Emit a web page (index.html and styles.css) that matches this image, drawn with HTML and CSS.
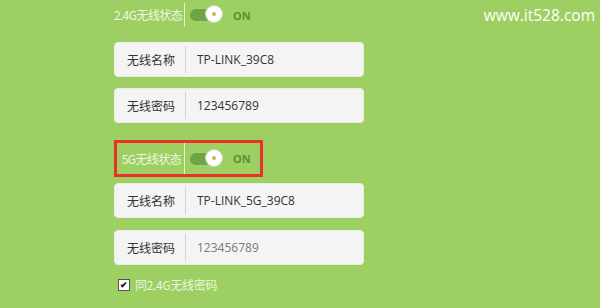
FILE: index.html
```html
<!DOCTYPE html>
<html>
<head>
<meta charset="utf-8">
<link rel="stylesheet" href="styles.css">
</head>
<body>
<div class="watermark">www.it528.com</div>
<div class="form">
  <div class="status-row first">
    <span class="status-label">2.4G无线状态</span>
    <span class="sep"></span>
    <span class="toggle"><span class="knob"></span></span>
    <span class="on">ON</span>
  </div>
  <div class="field f1">
    <span class="field-label">无线名称</span>
    <span class="field-value">TP-LINK_39C8</span>
  </div>
  <div class="field f2">
    <span class="field-label">无线密码</span>
    <span class="field-value">123456789</span>
  </div>
  <div class="status-row highlight">
    <span class="status-label">5G无线状态</span>
    <span class="sep"></span>
    <span class="toggle"><span class="knob"></span></span>
    <span class="on">ON</span>
  </div>
  <div class="field f3">
    <span class="field-label">无线名称</span>
    <span class="field-value">TP-LINK_5G_39C8</span>
  </div>
  <div class="field f4">
    <span class="field-label">无线密码</span>
    <span class="field-value muted">123456789</span>
  </div>
  <label class="check-row">
    <span class="checkbox">✔</span>
    <span class="check-text">同2.4G无线密码</span>
  </label>
</div>
</body>
</html>
```
FILE: styles.css
```css
html, body {
  margin: 0;
  padding: 0;
  width: 600px;
  height: 308px;
  overflow: hidden;
  background: #9dcf63;
  font-family: "Noto Sans CJK SC", "Noto Sans", sans-serif;
}
body { position: relative; }

.watermark {
  position: absolute;
  top: 4px;
  right: 5px;
  color: #ffffff;
  font-family: "Open Sans", "Liberation Sans", sans-serif;
  font-size: 15.5px;
}

.form {
  padding: 3px 0 0 114px;
  display: flex;
  flex-direction: column;
  align-items: flex-start;
}

.status-row {
  display: flex;
  align-items: center;
  height: 24px;
  box-sizing: border-box;
}
.status-label {
  width: 67px;
  text-align: right;
  white-space: nowrap;
  color: #eef8e2;
  font-size: 12px;
  letter-spacing: -0.6px;
  line-height: 24px;
}
.sep {
  width: 1px;
  align-self: stretch;
  background: #e4f3d2;
  margin-left: 3px;
}
.toggle {
  position: relative;
  width: 31px;
  height: 12px;
  border-radius: 6px;
  background: #6ea346;
  margin-left: 5px;
}
.knob {
  position: absolute;
  right: -1px;
  top: -3px;
  width: 16px;
  height: 16px;
  border-radius: 50%;
  background: radial-gradient(circle, #c9b85a 0 1.5px, #ffffff 2.5px);
  box-shadow: 0 0 0 1px #d6d6d6;
}
.on {
  margin-left: 12px;
  font-family: "Open Sans", "Liberation Sans", sans-serif;
  font-size: 11px;
  font-weight: bold;
  color: #5d8f33;
}

.highlight {
  margin-top: 17px;
  height: 37px;
  width: 149px;
  border: 3px solid #e8322a;
}
.highlight .status-label { width: 64px; }

.field {
  display: flex;
  align-items: center;
  width: 250px;
  height: 35px;
  box-sizing: border-box;
  background: #f4f4f4;
  border: 1px solid #e9eee2;
  border-radius: 4px;
  font-size: 12px;
}
.f1 { margin-top: 15px; }
.f2 { margin-top: 11px; }
.f3 { margin-top: 6px; }
.f4 { margin-top: 12px; }

.field-label {
  width: 58px;
  padding-left: 12px;
  height: 27px;
  line-height: 27px;
  color: #333333;
  border-right: 1px solid #d2d2d2;
}
.field-value {
  padding-left: 11px;
  color: #333333;
  font-family: "Open Sans", "Noto Sans", sans-serif;
  font-size: 12px;
}
.field-value.muted { color: #7a7a7a; }

.check-row {
  display: flex;
  align-items: center;
  margin-top: 11px;
  margin-left: 4px;
}
.checkbox {
  width: 10px;
  height: 10px;
  background: #ffffff;
  border: 1px solid #555;
  font-size: 9px;
  line-height: 10px;
  text-align: center;
  color: #111;
  font-weight: bold;
}
.check-text {
  margin-left: 5px;
  color: #ecf7df;
  font-size: 12px;
  letter-spacing: -0.3px;
}
```
